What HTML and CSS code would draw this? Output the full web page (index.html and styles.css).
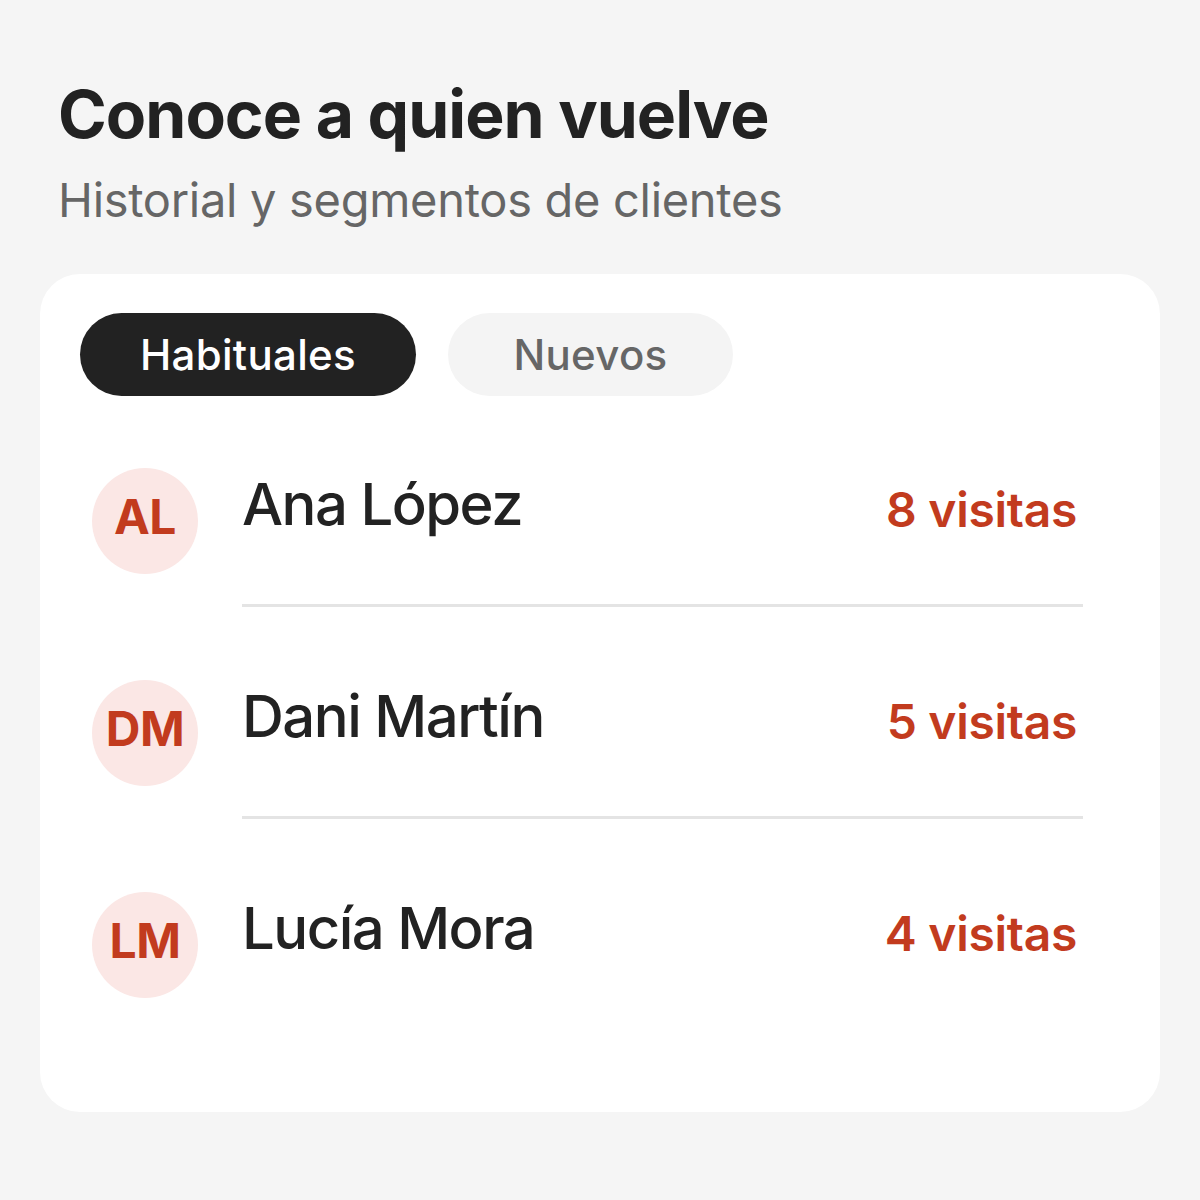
FILE: index.html
```html
<!DOCTYPE html>
<html lang="es">
<head>
  <meta charset="UTF-8">
  <meta name="viewport" content="width=device-width, initial-scale=1.0">
  <title>Conoce a quien vuelve</title>
  <link rel="stylesheet" href="styles.css">
</head>
<body>
  <header class="header">
    <h1>Conoce a quien vuelve</h1>
    <p class="subtitle">Historial y segmentos de clientes</p>
  </header>

  <section class="card">
    <div class="tabs">
      <button class="tab active">Habituales</button>
      <button class="tab">Nuevos</button>
    </div>

    <ul class="clients">
      <li class="client">
        <div class="avatar">AL</div>
        <div class="client-body">
          <span class="name">Ana López</span>
          <span class="visits">8 visitas</span>
        </div>
      </li>
      <li class="client">
        <div class="avatar">DM</div>
        <div class="client-body">
          <span class="name">Dani Martín</span>
          <span class="visits">5 visitas</span>
        </div>
      </li>
      <li class="client">
        <div class="avatar">LM</div>
        <div class="client-body">
          <span class="name">Lucía Mora</span>
          <span class="visits">4 visitas</span>
        </div>
      </li>
    </ul>
  </section>
</body>
</html>
```

FILE: styles.css
```css
body {
  font-family: Inter, 'Noto Sans', sans-serif;
  background-color: #f5f5f5;
  color: #222;
  margin: 0;
  padding: 74px 40px 0;
}

.header {
  padding-left: 18px;
}

h1 {
  font-size: 66px;
  font-weight: 700;
  letter-spacing: -1px;
  line-height: 80px;
  margin: 0;
}

.subtitle {
  font-size: 47px;
  color: #666;
  line-height: 56px;
  margin: 18px 0 0;
  letter-spacing: -0.3px;
}

.card {
  background: #fff;
  border-radius: 40px;
  margin-top: 46px;
  padding: 39px 40px 84px;
}

.tabs {
  display: flex;
  gap: 32px;
}

.tab {
  font-family: inherit;
  font-size: 42px;
  font-weight: 500;
  height: 83px;
  min-width: 285px;
  border: none;
  border-radius: 42px;
  background: #f4f4f4;
  color: #666;
  padding: 0 60px;
  letter-spacing: 0.3px;
}

.tab.active {
  background: #222;
  color: #fff;
}

.clients {
  list-style: none;
  margin: 0;
  padding: 0 37px 0 12px;
}

.client {
  display: flex;
  gap: 44px;
  padding-top: 72px;
}

.client + .client {
  padding-top: 73px;
}

.avatar {
  flex: none;
  box-sizing: border-box;
  width: 106px;
  height: 106px;
  padding-bottom: 10px;
  border-radius: 50%;
  background: #fbe7e5;
  color: #c23b1e;
  font-size: 48px;
  font-weight: 700;
  display: flex;
  align-items: center;
  justify-content: center;
  letter-spacing: -0.5px;
}

.client-body {
  flex: 1;
  display: flex;
  justify-content: space-between;
  align-items: flex-start;
  min-height: 106px;
  padding-bottom: 30px;
  border-bottom: 3px solid #e4e4e4;
}

.client:last-child .client-body {
  border-bottom: none;
}

.name {
  font-size: 58px;
  font-weight: 500;
  letter-spacing: -1.5px;
  line-height: 72px;
}

.visits {
  font-size: 48px;
  font-weight: 600;
  color: #c23b1e;
  letter-spacing: -0.3px;
  line-height: 72px;
  margin: 6px 6px 0 0;
}
```
